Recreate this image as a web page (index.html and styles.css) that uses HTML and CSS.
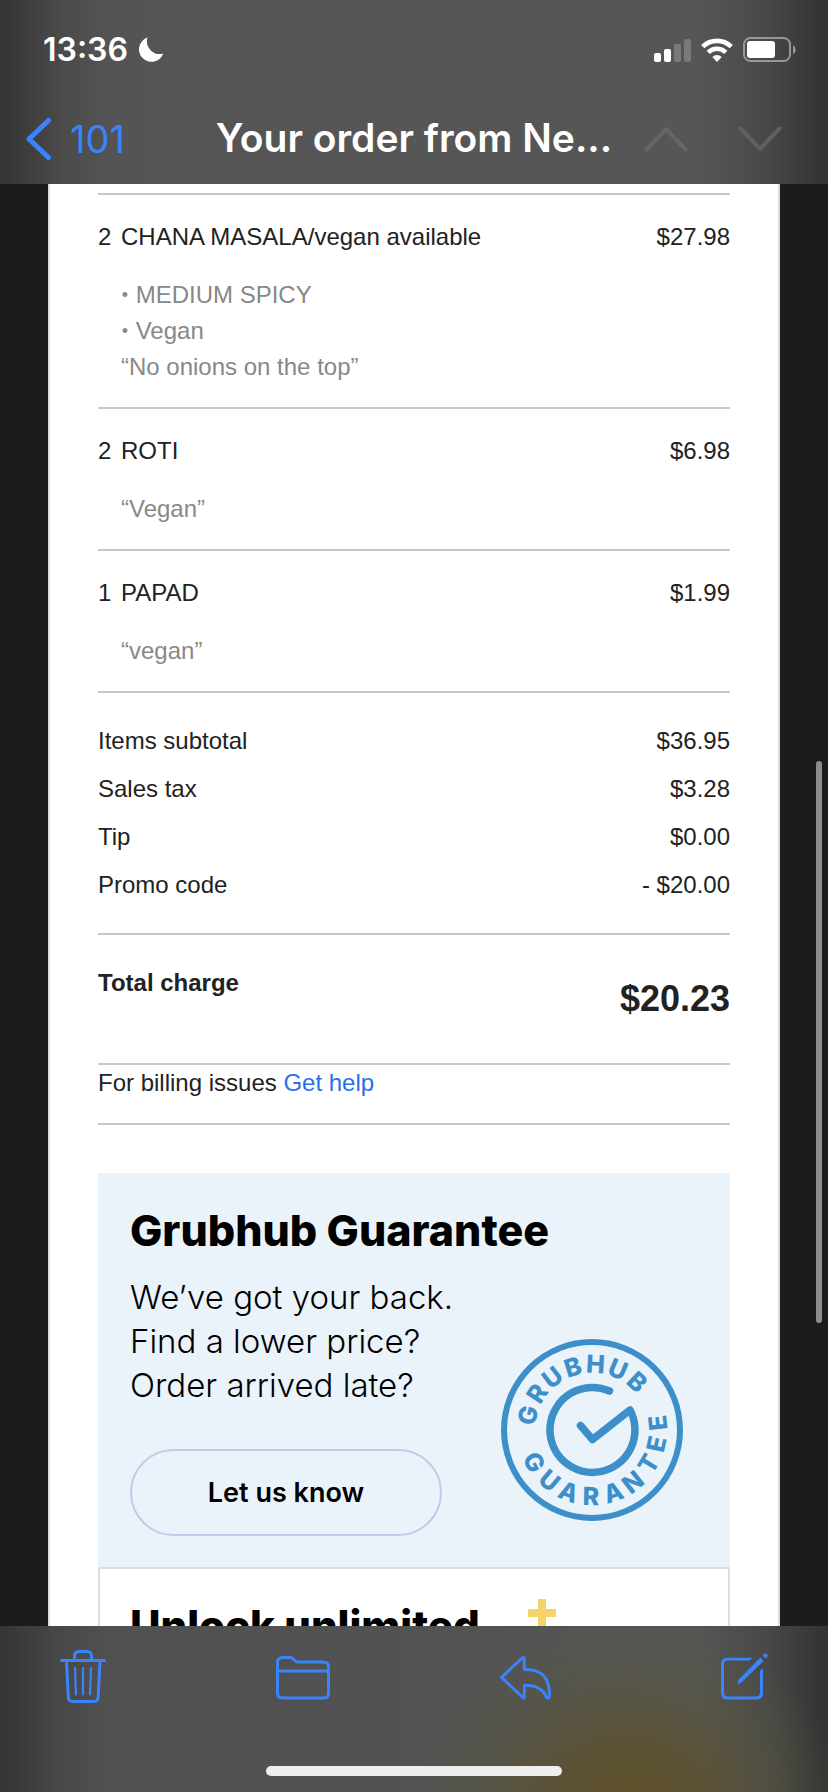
FILE: index.html
```html
<!DOCTYPE html>
<html lang="en">
<head>
<meta charset="utf-8">
<meta name="viewport" content="width=device-width">
<title>Your order</title>
<link rel="stylesheet" href="styles.css">
</head>
<body>
<header class="top">
  <div class="status">
    <span class="clock">13:36</span>
    <svg class="moon" width="26" height="26" viewBox="0 0 26 26"><path d="M9.500 0.500 A12.500 12.500 0 1 0 25.300 16.500 A12.800 12.800 0 0 1 9.500 0.500 Z" fill="#fff"/></svg>
    <div class="indicators">
      <svg width="37" height="24" viewBox="0 0 37 24"><g fill="#fff"><rect x="0" y="15" width="7" height="9" rx="2"/><rect x="10" y="11" width="7" height="13" rx="2"/></g><g fill="#7a7a7a"><rect x="20" y="6" width="7" height="18" rx="2"/><rect x="30" y="1" width="7" height="23" rx="2"/></g></svg>
      <svg width="32" height="24" viewBox="0 0 32 24"><g fill="none" stroke="#fff" stroke-width="4.600"><path d="M1.700 8.700 A20.500 20.500 0 0 1 30.300 8.700"/><path d="M7.200 14.400 A12.500 12.500 0 0 1 24.800 14.400"/></g><path d="M11.300 18.900 A6.800 6.800 0 0 1 20.700 18.900 L16 24 Z" fill="#fff"/></svg>
      <svg width="53" height="26" viewBox="0 0 53 26"><rect x="1" y="1" width="46" height="23" rx="6.500" fill="none" stroke="#979797" stroke-width="2"/><rect x="4" y="4" width="28" height="17" rx="3" fill="#fff"/><path d="M50 8.500 C53.600 10 53.600 15.500 50 17 Z" fill="#979797"/></svg>
    </div>
  </div>
  <nav class="bar">
    <button class="back" type="button">
      <svg width="26" height="42" viewBox="0 0 26 42"><path d="M22.500 2.500 L3 21 L22.500 39.500" fill="none" stroke="#3a84fb" stroke-width="5" stroke-linecap="round" stroke-linejoin="round"/></svg>
      <span>101</span>
    </button>
    <h1 class="subject">Your order from Ne...</h1>
    <div class="steps">
      <button type="button" aria-label="Previous message"><svg width="44" height="26" viewBox="0 0 44 26"><path d="M2.500 23.500 L22 3 L41.500 23.500" fill="none" stroke="#666" stroke-width="4" stroke-linecap="round" stroke-linejoin="round"/></svg></button>
      <button type="button" aria-label="Next message"><svg width="44" height="26" viewBox="0 0 44 26"><path d="M2.500 2.500 L22 23 L41.500 2.500" fill="none" stroke="#606060" stroke-width="4" stroke-linecap="round" stroke-linejoin="round"/></svg></button>
    </div>
  </nav>
</header>

<main class="view">
  <article class="mail">
    <table class="items">
      <tbody>
        <tr class="item"><td class="qty">2</td><td>CHANA MASALA/vegan available</td><td class="price">$27.98</td></tr>
        <tr class="notes"><td></td><td colspan="2"><span class="dot">•</span> MEDIUM SPICY<br><span class="dot">•</span> Vegan<br>“No onions on the top”</td></tr>
      </tbody>
      <tbody>
        <tr class="item"><td class="qty">2</td><td>ROTI</td><td class="price">$6.98</td></tr>
        <tr class="notes"><td></td><td colspan="2">“Vegan”</td></tr>
      </tbody>
      <tbody>
        <tr class="item"><td class="qty">1</td><td>PAPAD</td><td class="price">$1.99</td></tr>
        <tr class="notes"><td></td><td colspan="2">“vegan”</td></tr>
      </tbody>
    </table>
    <table class="sums">
      <tbody>
        <tr><th scope="row">Items subtotal</th><td>$36.95</td></tr>
        <tr><th scope="row">Sales tax</th><td>$3.28</td></tr>
        <tr><th scope="row">Tip</th><td>$0.00</td></tr>
        <tr><th scope="row">Promo code</th><td>- $20.00</td></tr>
      </tbody>
      <tfoot>
        <tr><th scope="row">Total charge</th><td>$20.23</td></tr>
      </tfoot>
    </table>
    <p class="billing">For billing issues <a href="#help">Get help</a></p>

    <section class="promo">
      <div class="pitch">
        <h2>Grubhub Guarantee</h2>
        <p>We’ve got your back.<br>Find a lower price?<br>Order arrived late?</p>
        <button class="pill" type="button">Let us know</button>
      </div>
      <svg class="seal" width="182" height="182" viewBox="-91 -91 182 182">
        <g fill="none" stroke="#3d8fca" stroke-linecap="round" stroke-linejoin="round">
          <circle r="88" stroke-width="6"/>
          <path d="M17.500 -39 A42.500 42.500 0 1 0 38 -20 L0.500 9.500 L-11.500 -4.500" stroke-width="7.500"/>
        </g>
        <text class="seal-text" x="-57.6 -52 -41.6 -24.4 -6.3 13.9 32.9" y="-3.6 -24.7 -40 -52.1 -57.4 -56.1 -47.3" rotate="-77 -56.5 -37 -17 3 23 43">GRUBHUB</text>
        <text class="seal-text" x="-70.2 -55.2 -35.6 -9.5 15 38.7 60.1 71.6 75.4" y="28.2 51.6 66.7 74.9 74 65 45.5 23.5 -0.4" rotate="61 40 21 1 -18.5 -38 -59 -77.5 -96">GUARANTEE</text>
      </svg>
    </section>

    <section class="offer">
      <h2>Unlock unlimited</h2>
      <svg width="28" height="28" viewBox="0 0 28 28"><path d="M10 0h8v10h10v8H18v10h-8V18H0v-8h10z" fill="#f5d36b"/></svg>
    </section>
  </article>
  <div class="thumb"></div>
</main>

<footer class="bottom">
  <div class="tools">
    <button type="button" aria-label="Delete"><svg width="46" height="53" viewBox="0 0 46 53"><g fill="none" stroke="#3a84fb" stroke-width="3" stroke-linecap="round" stroke-linejoin="round"><path d="M1.500 10.500 H44.500 M14.500 10 V6 Q14.500 1.500 19 1.500 H27 Q31.500 1.500 31.500 6 V10 M6.500 11 L8.300 47 Q8.500 51.500 13 51.500 H33.500 Q38 51.500 38.200 47 L40 11"/><path d="M15 18 L16 44.500 M23 18 V44.500 M31 18 L30 44.500" stroke-width="2.200"/></g></svg></button>
    <button class="raised" type="button" aria-label="Move to folder"><svg width="54" height="44" viewBox="0 0 54 44"><path d="M6.500 1.500 H14 C18.500 1.500 18 6 22 6 H47.500 Q52.500 6 52.500 11 V37 Q52.500 42 47.500 42 H6.500 Q1.500 42 1.500 37 V6.500 Q1.500 1.500 6.500 1.500 Z M1.500 15 H52.500" fill="none" stroke="#3a84fb" stroke-width="3"/></svg></button>
    <button class="raised" type="button" aria-label="Reply"><svg width="51" height="44" viewBox="0 0 51 44"><path d="M1.500 21.300 L22.300 2 Q24.300 0.700 24.300 3 V13.500 C42 13 49.500 22 49.500 39 Q49.500 43.500 46.500 41 C43 34 38 29.300 24.300 29.300 V40.500 Q24.300 43 22.300 41 Z" fill="none" stroke="#3a84fb" stroke-width="3" stroke-linejoin="round"/></svg></button>
    <button class="raised" type="button" aria-label="Compose"><svg width="47" height="47" viewBox="0 0 47 47"><path d="M31.500 4.700 L28.700 7.500 H7 Q3 7.500 3 11.500 V39.500 Q3 43.500 7 43.500 H35 Q39 43.500 39 39.500 V18 L42 15 V40 Q42 46.500 35.500 46.500 H6.500 Q0 46.500 0 40 V11 Q0 4.700 6.500 4.700 Z" fill="#3a84fb"/><path d="M39.300 4.600 L42.600 7.900 L20.800 29.300 L16 31.500 L17.800 26.500 Z" fill="#3a84fb"/><path d="M44.500 0 L47 2.500 L44.600 5.400 L41.800 2.600 Z" fill="#3a84fb"/></svg></button>
  </div>
  <div class="home"></div>
</footer>
</body>
</html>
```
FILE: styles.css
```css
* {
  box-sizing: border-box;
}

body {
  margin: 0;
  height: 100vh;
  display: flex;
  flex-direction: column;
  background: #1c1c1c;
  color: #222;
  font-family: "Liberation Sans", Arial, sans-serif;
  font-size: 24px;
  line-height: 36px;
}

h1, h2, p {
  margin: 0;
}

button {
  padding: 0;
  border: 0;
  background: none;
  color: inherit;
  font: inherit;
}

svg {
  display: block;
}

.top {
  flex: none;
  padding-bottom: 6px;
  background: linear-gradient(90deg, #353535 0, #383838 12px, #4a4a4a 60px, #545454 110px, #565656 50%, #565656 calc(100% - 130px), #484848 calc(100% - 60px), #343434 calc(100% - 8px), #333 100%);
  color: #fff;
  font-family: Inter, sans-serif;
}

.status {
  display: flex;
  align-items: center;
  height: 100px;
  padding: 0 32px 0 43px;
}

.clock {
  font-size: 32px;
  font-weight: 600;
}

.moon {
  margin-left: 10px;
}

.indicators {
  display: flex;
  align-items: center;
  gap: 10px;
  margin-left: auto;
}

.bar {
  display: grid;
  grid-template-columns: 1fr auto 1fr;
  align-items: center;
  height: 78px;
  padding: 0 46px 0 26px;
}

.back {
  display: flex;
  align-items: center;
  gap: 18px;
  color: #3a84fb;
  font-size: 38px;
}

.subject {
  padding: 0 0 3px 20px;
  font-size: 39px;
  font-weight: 600;
  white-space: nowrap;
}

.steps {
  display: flex;
  justify-content: flex-end;
  gap: 50px;
}

.view {
  position: relative;
  flex: 1;
  min-height: 0;
  overflow: hidden;
}

.mail {
  margin: 0 48px;
  padding: 9px 48px 48px;
  border: solid #dcdcdc;
  border-width: 0 2px;
  background: #fff;
}

table {
  width: 100%;
  border-spacing: 0;
}

th, td {
  padding: 0;
  font-weight: 400;
  text-align: left;
  vertical-align: top;
}

.items {
  border-top: 2px solid #c8c8c8;
}

.item td {
  padding-top: 24px;
}

.item .qty {
  width: 23px;
}

.item .price {
  text-align: right;
}

.notes td {
  padding: 22px 0;
  border-bottom: 2px solid #c8c8c8;
  color: #888;
}

.dot {
  display: inline-block;
  width: 8px;
  font-size: 18px;
  line-height: 18px;
  text-align: center;
  vertical-align: 2px;
}

.sums td {
  text-align: right;
}

.sums tbody tr > * {
  padding-top: 12px;
}

.sums tbody tr:first-child > * {
  padding-top: 30px;
}

.sums tbody tr:last-child > * {
  padding-bottom: 30px;
  border-bottom: 2px solid #c8c8c8;
}

.sums tfoot tr > * {
  padding: 30px 0;
  border-bottom: 2px solid #c8c8c8;
  font-weight: 700;
}

.sums tfoot td {
  font-size: 36px;
  line-height: 68px;
}

.billing {
  padding-bottom: 22px;
  border-bottom: 2px solid #c8c8c8;
}

.billing a {
  color: #2a6fe8;
  text-decoration: none;
}

.promo {
  display: flex;
  align-items: flex-end;
  justify-content: space-between;
  margin-top: 48px;
  padding: 30px 47px 31px 32px;
  background: #eaf2fa;
  color: #000;
  font-family: Inter, sans-serif;
}

.promo h2,
.offer h2 {
  font-size: 43px;
  font-weight: 800;
  line-height: 54px;
  white-space: nowrap;
}

.pitch {
  width: 312px;
}

.pitch p {
  margin-top: 18px;
  font-size: 33px;
  font-weight: 300;
  line-height: 44px;
  white-space: nowrap;
}

.pill {
  width: 100%;
  height: 87px;
  margin-top: 42px;
  border: 2px solid #c3cbe8;
  border-radius: 44px;
  font-size: 27px;
  font-weight: 600;
}

.seal {
  flex: none;
  margin-bottom: 15px;
}

.seal-text {
  fill: #3d8fca;
  font-size: 25px;
  font-weight: 800;
}

.offer {
  display: flex;
  gap: 48px;
  padding: 30px;
  border: 2px solid #dcdce4;
  color: #000;
  font-family: Inter, sans-serif;
}

.offer h2 {
  font-size: 42px;
}

.thumb {
  position: absolute;
  top: 40%;
  right: 6px;
  width: 6px;
  height: 39%;
  border-radius: 3px;
  background: #8c8c8c;
}

.bottom {
  flex: none;
  display: flex;
  flex-direction: column;
  align-items: center;
  justify-content: space-between;
  height: 166px;
  padding: 24px 60px 16px;
  background:
    radial-gradient(ellipse 220px 190px at 76% 112%, #5f5128 0, #5d512dcc 35%, #5a573d66 70%, #5a573d00 100%),
    linear-gradient(90deg, #353535 0, #383838 12px, #484848 60px, #515151 110px, #525252 50%, #565656 calc(100% - 130px), #484848 calc(100% - 60px), #343434 calc(100% - 8px), #333 100%);
}

.tools {
  display: flex;
  align-items: flex-end;
  justify-content: space-between;
  width: 100%;
}

.raised {
  padding-bottom: 3px;
}

.home {
  width: 296px;
  height: 10px;
  border-radius: 5px;
  background: #eee;
}
```
